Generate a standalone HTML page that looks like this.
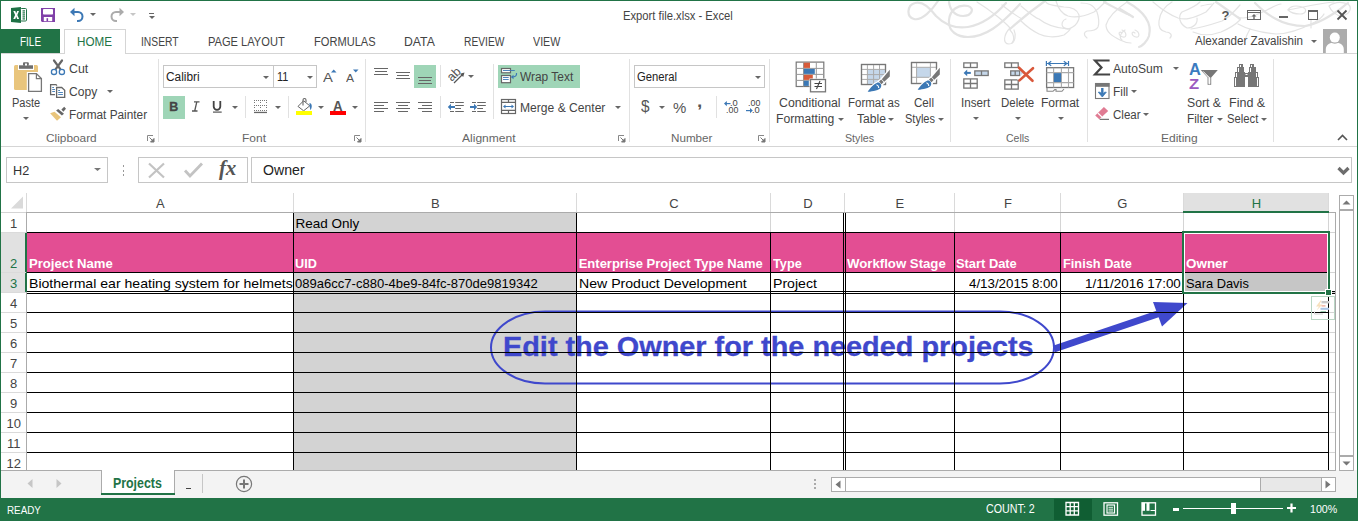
<!DOCTYPE html>
<html><head><meta charset="utf-8"><title>Excel</title>
<style>
*{margin:0;padding:0;box-sizing:border-box}
html,body{width:1358px;height:521px;overflow:hidden;background:#fff;font-family:"Liberation Sans",sans-serif;position:relative}
.a{position:absolute}
.t{position:absolute;white-space:nowrap;line-height:1;transform-origin:0 0}
svg.a{overflow:visible}
</style></head><body>
<div class="a" style="left:0px;top:0px;width:1358px;height:1px;background:#217346;"></div>
<div class="a" style="left:0px;top:0px;width:1px;height:521px;background:#217346;"></div>
<div class="a" style="left:1357px;top:0px;width:1px;height:521px;background:#217346;"></div>
<div class="t" style="left:623.10px;top:10.25px;font-size:12.00px;color:#444;transform:scaleX(0.9356);">Export file.xlsx - Excel</div>
<div class="a" style="left:0px;top:29px;width:60px;height:24px;background:#217346;"></div>
<div class="a" style="left:1px;top:53px;width:1356px;height:1px;background:#d5d5d5;"></div>
<div class="a" style="left:64px;top:29px;width:62px;height:25px;border:1px solid #d5d5d5;border-bottom:none;background:#fff"></div>
<div class="t" style="left:20.00px;top:36.25px;font-size:12.00px;color:#fff;transform:scaleX(0.8294);">FILE</div>
<div class="t" style="left:77.00px;top:36.25px;font-size:12.00px;color:#217346;transform:scaleX(0.9722);">HOME</div>
<div class="t" style="left:140.90px;top:36.25px;font-size:12.00px;color:#444;transform:scaleX(0.8584);">INSERT</div>
<div class="t" style="left:207.70px;top:36.25px;font-size:12.00px;color:#444;transform:scaleX(0.9250);">PAGE LAYOUT</div>
<div class="t" style="left:313.60px;top:36.25px;font-size:12.00px;color:#444;transform:scaleX(0.9241);">FORMULAS</div>
<div class="t" style="left:404.00px;top:36.25px;font-size:12.00px;color:#444;transform:scaleX(1.0185);">DATA</div>
<div class="t" style="left:463.80px;top:36.25px;font-size:12.00px;color:#444;transform:scaleX(0.8534);">REVIEW</div>
<div class="t" style="left:532.70px;top:36.25px;font-size:12.00px;color:#444;transform:scaleX(0.8904);">VIEW</div>
<div class="t" style="left:1195.40px;top:35.25px;font-size:12.00px;color:#444;transform:scaleX(0.9693);">Alexander Zavalishin</div>
<div class="a" style="left:1px;top:146px;width:1356px;height:1px;background:#d5d5d5;"></div>
<div class="a" style="left:158px;top:59px;width:1px;height:83px;background:#e1e1e1;"></div>
<div class="a" style="left:365px;top:59px;width:1px;height:83px;background:#e1e1e1;"></div>
<div class="a" style="left:629px;top:59px;width:1px;height:83px;background:#e1e1e1;"></div>
<div class="a" style="left:769px;top:59px;width:1px;height:83px;background:#e1e1e1;"></div>
<div class="a" style="left:950px;top:59px;width:1px;height:83px;background:#e1e1e1;"></div>
<div class="a" style="left:1087px;top:59px;width:1px;height:83px;background:#e1e1e1;"></div>
<div class="a" style="left:1273px;top:59px;width:1px;height:83px;background:#e1e1e1;"></div>
<div class="t" style="left:46.00px;top:132.50px;font-size:11.50px;color:#666;transform:scaleX(1.0301);">Clipboard</div>
<div class="t" style="left:241.90px;top:132.50px;font-size:11.50px;color:#666;transform:scaleX(1.0435);">Font</div>
<div class="t" style="left:462.40px;top:132.50px;font-size:11.50px;color:#666;transform:scaleX(1.0466);">Alignment</div>
<div class="t" style="left:671.00px;top:132.50px;font-size:11.50px;color:#666;transform:scaleX(1.0127);">Number</div>
<div class="t" style="left:844.70px;top:132.50px;font-size:11.50px;color:#666;transform:scaleX(0.9286);">Styles</div>
<div class="t" style="left:1006.10px;top:132.50px;font-size:11.50px;color:#666;transform:scaleX(0.9145);">Cells</div>
<div class="t" style="left:1161.10px;top:132.50px;font-size:11.50px;color:#666;transform:scaleX(1.0429);">Editing</div>
<div class="a" style="left:6px;top:157px;width:102px;height:26px;border:1px solid #c6c6c6;background:#fff;"></div>
<div class="a" style="left:138px;top:157px;width:110px;height:26px;border:1px solid #c6c6c6;background:#fff;"></div>
<div class="a" style="left:251px;top:157px;width:1101px;height:26px;border:1px solid #c6c6c6;background:#fff;"></div>
<div class="t" style="left:263.10px;top:163.25px;font-size:14.00px;color:#222;transform:scaleX(1.0090);">Owner</div>
<div class="a" style="left:1184px;top:193px;width:144px;height:19px;background:#e1e1e1;"></div>
<div class="a" style="left:293px;top:193px;width:1px;height:19px;background:#dadada;"></div>
<div class="a" style="left:576px;top:193px;width:1px;height:19px;background:#dadada;"></div>
<div class="a" style="left:770px;top:193px;width:1px;height:19px;background:#dadada;"></div>
<div class="a" style="left:844px;top:193px;width:1px;height:19px;background:#dadada;"></div>
<div class="a" style="left:954px;top:193px;width:1px;height:19px;background:#dadada;"></div>
<div class="a" style="left:1060px;top:193px;width:1px;height:19px;background:#dadada;"></div>
<div class="a" style="left:1183px;top:193px;width:1px;height:19px;background:#dadada;"></div>
<div class="a" style="left:1328px;top:193px;width:1px;height:19px;background:#dadada;"></div>
<div class="a" style="left:26px;top:193px;width:1px;height:19px;background:#dadada;"></div>
<div class="a" style="left:1px;top:212px;width:1335px;height:1px;background:#ababab;"></div>
<div class="a" style="left:1px;top:212px;width:25px;height:1px;background:#d4d4d4;"></div>
<div class="a" style="left:1183px;top:211px;width:146px;height:2px;background:#217346;"></div>
<div class="a" style="left:1px;top:233px;width:25px;height:59px;background:#e1e1e1;"></div>
<div class="a" style="left:26px;top:213px;width:1px;height:258px;background:#ababab;"></div>
<div class="a" style="left:25px;top:233px;width:2px;height:59px;background:#217346;"></div>
<div class="a" style="left:1px;top:232px;width:25px;height:1px;background:#dadada;"></div>
<div class="a" style="left:1px;top:272px;width:25px;height:1px;background:#dadada;"></div>
<div class="a" style="left:1px;top:292px;width:25px;height:1px;background:#dadada;"></div>
<div class="a" style="left:1px;top:312px;width:25px;height:1px;background:#dadada;"></div>
<div class="a" style="left:1px;top:332px;width:25px;height:1px;background:#dadada;"></div>
<div class="a" style="left:1px;top:352px;width:25px;height:1px;background:#dadada;"></div>
<div class="a" style="left:1px;top:372px;width:25px;height:1px;background:#dadada;"></div>
<div class="a" style="left:1px;top:392px;width:25px;height:1px;background:#dadada;"></div>
<div class="a" style="left:1px;top:412px;width:25px;height:1px;background:#dadada;"></div>
<div class="a" style="left:1px;top:432px;width:25px;height:1px;background:#dadada;"></div>
<div class="a" style="left:1px;top:452px;width:25px;height:1px;background:#dadada;"></div>
<div class="a" style="left:1px;top:470px;width:1356px;height:28px;background:#f3f3f3;"></div>
<div class="a" style="left:1px;top:470px;width:1335px;height:1px;background:#ababab;"></div>
<div class="a" style="left:1px;top:498px;width:1357px;height:23px;background:#217346;"></div>
<div class="a" style="left:294px;top:213px;width:282px;height:257px;background:#d3d3d3;"></div>
<div class="a" style="left:27px;top:233px;width:1301px;height:39px;background:#e34e93;"></div>
<div class="a" style="left:1184px;top:273px;width:144px;height:18px;background:#c6c6c6;"></div>
<div class="t" style="left:156.05px;top:197.25px;font-size:13.00px;color:#444;">A</div>
<div class="t" style="left:431.08px;top:197.25px;font-size:13.00px;color:#444;">B</div>
<div class="t" style="left:669.22px;top:197.25px;font-size:13.00px;color:#444;">C</div>
<div class="t" style="left:803.22px;top:197.25px;font-size:13.00px;color:#444;">D</div>
<div class="t" style="left:895.58px;top:197.25px;font-size:13.00px;color:#444;">E</div>
<div class="t" style="left:1003.93px;top:197.25px;font-size:13.00px;color:#444;">F</div>
<div class="t" style="left:1117.33px;top:197.25px;font-size:13.00px;color:#444;">G</div>
<div class="t" style="left:1251.72px;top:197.25px;font-size:13.00px;color:#217346;">H</div>
<div class="t" style="left:10.09px;top:217.25px;font-size:13.00px;color:#444;">1</div>
<div class="t" style="left:10.09px;top:257.25px;font-size:13.00px;color:#217346;">2</div>
<div class="t" style="left:10.09px;top:277.25px;font-size:13.00px;color:#217346;">3</div>
<div class="t" style="left:10.09px;top:297.25px;font-size:13.00px;color:#444;">4</div>
<div class="t" style="left:10.09px;top:317.25px;font-size:13.00px;color:#444;">5</div>
<div class="t" style="left:10.09px;top:337.25px;font-size:13.00px;color:#444;">6</div>
<div class="t" style="left:10.09px;top:357.25px;font-size:13.00px;color:#444;">7</div>
<div class="t" style="left:10.09px;top:377.25px;font-size:13.00px;color:#444;">8</div>
<div class="t" style="left:10.09px;top:397.25px;font-size:13.00px;color:#444;">9</div>
<div class="t" style="left:6.48px;top:417.25px;font-size:13.00px;color:#444;">10</div>
<div class="t" style="left:6.94px;top:437.25px;font-size:13.00px;color:#444;">11</div>
<div class="t" style="left:6.48px;top:457.25px;font-size:13.00px;color:#444;">12</div>
<div class="t" style="left:295.40px;top:217.00px;font-size:13.50px;color:#000;">Read Only</div>
<div class="t" style="left:28.70px;top:257.25px;font-size:13.00px;color:#fff;font-weight:bold;transform:scaleX(1.0088);">Project Name</div>
<div class="t" style="left:295.40px;top:257.25px;font-size:13.00px;color:#fff;font-weight:bold;transform:scaleX(0.9750);">UID</div>
<div class="t" style="left:578.70px;top:257.25px;font-size:13.00px;color:#fff;font-weight:bold;">Enterprise Project Type Name</div>
<div class="t" style="left:773.10px;top:257.25px;font-size:13.00px;color:#fff;font-weight:bold;transform:scaleX(0.9803);">Type</div>
<div class="t" style="left:846.50px;top:257.25px;font-size:13.00px;color:#fff;font-weight:bold;transform:scaleX(1.0154);">Workflow Stage</div>
<div class="t" style="left:956.40px;top:257.25px;font-size:13.00px;color:#fff;font-weight:bold;transform:scaleX(0.9898);">Start Date</div>
<div class="t" style="left:1062.80px;top:257.25px;font-size:13.00px;color:#fff;font-weight:bold;transform:scaleX(0.9819);">Finish Date</div>
<div class="t" style="left:1185.60px;top:257.25px;font-size:13.00px;color:#fff;font-weight:bold;transform:scaleX(1.0339);">Owner</div>
<div class="t" style="left:28.70px;top:277.00px;font-size:13.50px;color:#000;transform:scaleX(1.0433);">Biothermal ear heating system for helmets</div>
<div class="t" style="left:295.40px;top:277.00px;font-size:13.50px;color:#000;transform:scaleX(0.9656);">089a6cc7-c880-4be9-84fc-870de9819342</div>
<div class="t" style="left:578.70px;top:277.00px;font-size:13.50px;color:#000;transform:scaleX(1.0449);">New Product Development</div>
<div class="t" style="left:773.10px;top:277.00px;font-size:13.50px;color:#000;transform:scaleX(1.0432);">Project</div>
<div class="t" style="left:1185.60px;top:277.00px;font-size:13.50px;color:#000;transform:scaleX(0.9513);">Sara Davis</div>
<div class="t" style="left:968.60px;top:277.00px;font-size:13.50px;color:#000;transform:scaleX(0.9854);">4/13/2015 8:00</div>
<div class="t" style="left:1084.80px;top:277.00px;font-size:13.50px;color:#000;transform:scaleX(0.9918);">1/11/2016 17:00</div>
<svg class="a" style="left:0px;top:0px;" width="1358" height="521" viewBox="0 0 1358 521"><rect x="491" y="311.5" width="563" height="72" rx="54" ry="36" fill="none" stroke="#3f48cc" stroke-width="2"/><line x1="1054" y1="349" x2="1162" y2="312.5" stroke="#3f48cc" stroke-width="7"/><path d="M1153 302 L1187.5 303 L1162 326.5 Z" fill="#3f48cc"/></svg>
<div class="t" style="left:502.90px;top:332.00px;font-size:28.50px;color:#3f48cc;font-weight:bold;transform:scaleX(1.0124);-webkit-text-stroke:0.3px #3f48cc;">Edit the Owner for the needed projects</div>
<div class="a" style="left:770px;top:213px;width:1px;height:19px;background:#d4d4d4;"></div>
<div class="a" style="left:954px;top:213px;width:1px;height:19px;background:#d4d4d4;"></div>
<div class="a" style="left:1060px;top:213px;width:1px;height:19px;background:#d4d4d4;"></div>
<div class="a" style="left:1183px;top:213px;width:1px;height:19px;background:#d4d4d4;"></div>
<div class="a" style="left:1328px;top:213px;width:1px;height:19px;background:#d4d4d4;"></div>
<div class="a" style="left:293px;top:213px;width:1px;height:257px;background:#000;"></div>
<div class="a" style="left:576px;top:213px;width:1px;height:257px;background:#000;"></div>
<div class="a" style="left:843px;top:213px;width:1px;height:257px;background:#000;"></div>
<div class="a" style="left:845px;top:213px;width:1px;height:257px;background:#000;"></div>
<div class="a" style="left:770px;top:233px;width:1px;height:237px;background:#000;"></div>
<div class="a" style="left:954px;top:233px;width:1px;height:237px;background:#000;"></div>
<div class="a" style="left:1060px;top:233px;width:1px;height:237px;background:#000;"></div>
<div class="a" style="left:1183px;top:233px;width:1px;height:237px;background:#000;"></div>
<div class="a" style="left:1328px;top:233px;width:1px;height:237px;background:#000;"></div>
<div class="a" style="left:27px;top:232px;width:1302px;height:1px;background:#000;"></div>
<div class="a" style="left:27px;top:272px;width:1302px;height:1px;background:#000;"></div>
<div class="a" style="left:27px;top:291px;width:1302px;height:1px;background:#000;"></div>
<div class="a" style="left:27px;top:293px;width:1302px;height:1px;background:#000;"></div>
<div class="a" style="left:27px;top:312px;width:1302px;height:1px;background:#000;"></div>
<div class="a" style="left:27px;top:332px;width:1302px;height:1px;background:#000;"></div>
<div class="a" style="left:27px;top:352px;width:1302px;height:1px;background:#000;"></div>
<div class="a" style="left:27px;top:372px;width:1302px;height:1px;background:#000;"></div>
<div class="a" style="left:27px;top:392px;width:1302px;height:1px;background:#000;"></div>
<div class="a" style="left:27px;top:412px;width:1302px;height:1px;background:#000;"></div>
<div class="a" style="left:27px;top:432px;width:1302px;height:1px;background:#000;"></div>
<div class="a" style="left:27px;top:452px;width:1302px;height:1px;background:#000;"></div>
<div class="a" style="left:1329px;top:213px;width:6px;height:257px;background:#fff;"></div>
<div class="a" style="left:1335px;top:212px;width:1px;height:258px;background:#ababab;"></div>
<div class="a" style="left:1329px;top:232px;width:6px;height:1px;background:#d4d4d4;"></div>
<div class="a" style="left:1329px;top:272px;width:6px;height:1px;background:#d4d4d4;"></div>
<div class="a" style="left:1329px;top:292px;width:6px;height:1px;background:#d4d4d4;"></div>
<div class="a" style="left:1329px;top:312px;width:6px;height:1px;background:#d4d4d4;"></div>
<div class="a" style="left:1329px;top:332px;width:6px;height:1px;background:#d4d4d4;"></div>
<div class="a" style="left:1329px;top:352px;width:6px;height:1px;background:#d4d4d4;"></div>
<div class="a" style="left:1329px;top:372px;width:6px;height:1px;background:#d4d4d4;"></div>
<div class="a" style="left:1329px;top:392px;width:6px;height:1px;background:#d4d4d4;"></div>
<div class="a" style="left:1329px;top:412px;width:6px;height:1px;background:#d4d4d4;"></div>
<div class="a" style="left:1329px;top:432px;width:6px;height:1px;background:#d4d4d4;"></div>
<div class="a" style="left:1329px;top:452px;width:6px;height:1px;background:#d4d4d4;"></div>
<div class="a" style="left:1182px;top:231px;width:148px;height:63px;border:2px solid #217346"></div>
<div class="a" style="left:1184px;top:233px;width:144px;height:1px;background:#fff;"></div>
<div class="a" style="left:1184px;top:291px;width:144px;height:1px;background:#fff;"></div>
<div class="a" style="left:1327px;top:233px;width:1px;height:59px;background:#fff;"></div>
<div class="a" style="left:1184px;top:233px;width:1px;height:59px;background:#fff;"></div>
<div class="a" style="left:1329px;top:291px;width:6px;height:1px;background:#000;"></div>
<div class="a" style="left:1329px;top:293px;width:6px;height:1px;background:#000;"></div>
<div class="a" style="left:1325px;top:289px;width:7px;height:7px;background:#fff;"></div>
<div class="a" style="left:1326px;top:290px;width:5px;height:5px;background:#217346;"></div>
<svg class="a" style="left:0px;top:0px;" width="1358" height="52" viewBox="0 0 1358 52"><g fill="none" stroke="#e3e3e3" stroke-linecap="round"><path d="M938 1 C 932 10, 922 21, 914 19 C 906 17, 907 5, 915 3 C 922 1, 930 8, 936 16 C 945 25, 955 29, 968 27 C 985 24, 998 12, 1006 3" stroke-width="2.2"/><path d="M949 2 C 950 10, 955 16, 963 16 C 972 16, 975 8, 968 6 C 958 4, 950 10, 949 20 C 948 32, 958 37, 968 37 C 985 37, 1000 26, 1020 4" stroke-width="2.2"/><path d="M1010 29 C 1020 20, 1035 8, 1045 1" stroke-width="2.2"/><path d="M1104 2 C 1112 6, 1122 12, 1130 15" stroke-width="2.2"/><path d="M1127 2 C 1145 12, 1152 24, 1149 36 C 1147 42, 1142 46, 1139 47" stroke-width="2.2"/><path d="M1120 9 C 1125 12, 1130 15, 1133 17" stroke-width="2.2"/><path d="M1216 2 C 1225 8, 1233 14, 1240 19" stroke-width="2.2"/><path d="M1255 3 C 1262 10, 1270 16, 1276 19 C 1283 23, 1292 26, 1305 26 C 1318 24, 1330 16, 1339 10 C 1343 7, 1346 4, 1348 3" stroke-width="2.2"/><path d="M977 2 C 990 10, 1005 22, 1010 28 C 1004 34, 1002 44, 1009 44 C 1016 44, 1016 34, 1014 30" stroke-width="1.2"/><path d="M1002 5 C 1008 10, 1015 15, 1022 19" stroke-width="1.2"/><path d="M1021 6 C 1028 12, 1035 18, 1039 19 C 1045 24, 1055 28, 1068 29 C 1076 27, 1080 20, 1079 15 C 1077 9, 1070 7, 1064 7 C 1055 6, 1047 5, 1046 2" stroke-width="1.2"/><path d="M1021 21 C 1028 28, 1035 32, 1039 34 C 1045 37, 1055 38, 1064 35 C 1068 32, 1070 30, 1070 29" stroke-width="1.2"/><path d="M1066 19 C 1062 20, 1061 25, 1063 27 C 1065 29, 1068 29, 1070 29" stroke-width="1.2"/><path d="M1056 1 C 1058 8, 1062 14, 1068 16 C 1075 18, 1083 17, 1094 12 C 1100 8, 1103 4, 1106 1" stroke-width="1.2"/><path d="M1081 3 C 1088 3, 1093 4, 1097 12 C 1099 18, 1099 24, 1098 27 C 1096 31, 1090 31, 1087 31 C 1084 32, 1083 35, 1087 38" stroke-width="1.2"/><path d="M1127 2 C 1115 10, 1108 18, 1106 25 C 1106 32, 1112 36, 1120 40 C 1124 42, 1128 43, 1131 43" stroke-width="1.2"/><path d="M1125 30 C 1120 33, 1119 38, 1122 40" stroke-width="1.2"/><path d="M1010 30 C 1014 34, 1015 40, 1012 43" stroke-width="1.2"/><path d="M1122 33 C 1118 30, 1118 36, 1123 37 C 1127 38, 1127 32, 1122 30" stroke-width="1.2"/><path d="M1135 33 C 1131 30, 1131 36, 1136 37 C 1140 38, 1140 32, 1135 30" stroke-width="1.2"/><path d="M1153 2 C 1160 8, 1170 15, 1178 18 C 1185 20, 1192 19, 1206 12 C 1210 8, 1213 4, 1214 3" stroke-width="1.2"/><path d="M1172 2 C 1165 6, 1160 12, 1159 21 C 1158 28, 1161 31, 1166 32 C 1170 32, 1173 35, 1170 38" stroke-width="1.2"/><path d="M1200 2 C 1196 6, 1192 8, 1182 12 C 1178 16, 1179 24, 1187 28 C 1193 28, 1198 24, 1197 18" stroke-width="1.2"/><path d="M1191 29 C 1200 28, 1210 25, 1222 21 C 1228 18, 1234 12, 1240 5" stroke-width="1.2"/><path d="M1193 32 C 1200 35, 1210 36, 1221 32 C 1228 29, 1234 26, 1240 20" stroke-width="1.2"/><path d="M1201 6 C 1205 5, 1209 4, 1212 4" stroke-width="1.2"/><path d="M1288 10 C 1290 6, 1296 5, 1302 7 C 1308 9, 1306 14, 1300 14 C 1294 14, 1290 12, 1288 10 C 1300 8, 1315 4, 1334 2" stroke-width="1.2"/><path d="M1329 6 C 1333 3, 1340 1, 1348 4 C 1352 7, 1351 14, 1342 16 C 1336 16, 1331 11, 1329 6" stroke-width="1.2"/><path d="M1238 17 C 1244 20, 1255 16, 1267 10 C 1273 7, 1278 4, 1281 4" stroke-width="1.2"/><path d="M1238 24 C 1245 28, 1255 32, 1276 34 C 1287 34, 1300 30, 1315 22 C 1320 19, 1323 16, 1324 14" stroke-width="1.2"/><path d="M1250 29 C 1248 33, 1246 36, 1246 38" stroke-width="1.2"/><path d="M1311 19 C 1311 22, 1311 25, 1311 28" stroke-width="1.2"/></g></svg>
<svg class="a" style="left:10px;top:6px;" width="18" height="18" viewBox="0 0 18 18"><path d="M1 2 L11 1 V17 L1 16 Z" fill="#1e7145"/><rect x="10.5" y="2.5" width="6" height="12.5" rx="1" fill="#fff" stroke="#1e7145" stroke-width="1"/><g fill="#1e7145"><rect x="12.5" y="4.3" width="2.5" height="1.2"/><rect x="12.5" y="6.3" width="2.5" height="1.2"/><rect x="12.5" y="8.3" width="2.5" height="1.2"/><rect x="12.5" y="10.3" width="2.5" height="1.2"/><rect x="12.5" y="12.3" width="2.5" height="1.2"/></g><path d="M3.3 5 H5.3 L6.2 7.5 L7.1 5 H9 L7.3 9 L9.1 13 H7.1 L6.2 10.5 L5.3 13 H3.3 L5.1 9 Z" fill="#fff"/></svg>
<svg class="a" style="left:41px;top:8px;" width="14" height="14" viewBox="0 0 14 14"><path d="M0 0 H14 V14 H1 L0 13 Z" fill="#8040a8"/><rect x="2" y="1" width="10" height="5.5" rx="0.8" fill="#fff"/><rect x="2.8" y="9" width="8.4" height="4.2" fill="#fff"/><rect x="5.5" y="10.2" width="1.6" height="3" fill="#8040a8"/></svg>
<svg class="a" style="left:69px;top:7px;" width="16" height="15" viewBox="0 0 16 15"><path d="M3 5 H9 A4.5 4.5 0 0 1 9 14 H8" fill="none" stroke="#3c78b5" stroke-width="2"/><path d="M1 5 L5.5 0.8 V9.2 Z" fill="#3c78b5"/></svg>
<svg class="a" style="left:89.5px;top:13px;" width="6.0" height="3.5" viewBox="0 0 6.0 3.5"><path d="M0 0H6 L3.0 3 Z" fill="#666"/></svg>
<svg class="a" style="left:109px;top:7px;" width="16" height="15" viewBox="0 0 16 15"><path d="M13 5 H7 A4.5 4.5 0 0 0 7 14 H8" fill="none" stroke="#ababab" stroke-width="2"/><path d="M15 5 L10.5 0.8 V9.2 Z" fill="#ababab"/></svg>
<svg class="a" style="left:129.5px;top:13px;" width="6.0" height="3.5" viewBox="0 0 6.0 3.5"><path d="M0 0H6 L3.0 3 Z" fill="#c6c6c6"/></svg>
<div class="a" style="left:149px;top:13px;width:5px;height:1px;background:#666;"></div>
<svg class="a" style="left:148.5px;top:16px;" width="6.0" height="3.5" viewBox="0 0 6.0 3.5"><path d="M0 0H6 L3.0 3 Z" fill="#666"/></svg>
<div class="t" style="left:1221.54px;top:9.25px;font-size:13.00px;color:#555;font-weight:bold;">?</div>
<svg class="a" style="left:1247px;top:10px;" width="15" height="11" viewBox="0 0 15 11"><rect x="0.5" y="0.5" width="13" height="9" fill="none" stroke="#666"/><line x1="1" y1="2.5" x2="13" y2="2.5" stroke="#666"/><path d="M7 4 L4.5 6.5 H6.3 V9 H7.7 V6.5 H9.5 Z" fill="#666"/></svg>
<div class="a" style="left:1279px;top:16px;width:9px;height:2px;background:#666;"></div>
<div class="a" style="left:1308px;top:10px;width:10px;height:2px;background:#666;"></div>
<div class="a" style="left:1308px;top:10px;width:1px;height:10px;background:#666;"></div>
<div class="a" style="left:1317px;top:10px;width:1px;height:10px;background:#666;"></div>
<div class="a" style="left:1308px;top:19px;width:10px;height:1px;background:#666;"></div>
<svg class="a" style="left:1336px;top:9px;" width="12" height="12" viewBox="0 0 12 12"><path d="M1.5 1.5 L10.5 10.5 M10.5 1.5 L1.5 10.5" stroke="#555" stroke-width="1.8"/></svg>
<svg class="a" style="left:1310.5px;top:40px;" width="6.0" height="3.5" viewBox="0 0 6.0 3.5"><path d="M0 0H6 L3.0 3 Z" fill="#666"/></svg>
<svg class="a" style="left:1323px;top:29px;" width="24" height="24" viewBox="0 0 24 24"><rect width="24" height="24" fill="#acacac"/><path d="M2.8 24 V20.5 C2.8 16, 6.5 13.6, 11.8 13.6 C17.1 13.6, 20.8 16, 20.8 20.5 V24 Z" fill="#fff"/><circle cx="11.8" cy="8.6" r="6.2" fill="#acacac"/><circle cx="11.8" cy="8.6" r="5" fill="#fff"/></svg>
<svg class="a" style="left:8px;top:58px;" width="40" height="40" viewBox="0 0 40 40"><rect x="6" y="7" width="24" height="25" rx="1.5" fill="#e9c57c"/><rect x="10" y="6" width="16" height="6" fill="#fff"/><rect x="11" y="7.3" width="14" height="3.5" fill="#6d6d6d"/><rect x="15" y="4.2" width="5.8" height="3.5" rx="1" fill="#6d6d6d"/><rect x="17" y="5.5" width="2" height="2" fill="#fff"/><rect x="18.8" y="14" width="16" height="20.5" fill="#fff"/><path d="M20.6 15.6 H28.4 L33.4 20.6 V33.4 H20.6 Z" fill="#fff" stroke="#777" stroke-width="1.3"/><path d="M28.4 15.6 V20.6 H33.4" fill="none" stroke="#777" stroke-width="1.2"/></svg>
<div class="t" style="left:11.90px;top:97.25px;font-size:12.00px;color:#444;transform:scaleX(0.9198);">Paste</div>
<svg class="a" style="left:22.5px;top:117px;" width="6.0" height="3.5" viewBox="0 0 6.0 3.5"><path d="M0 0H6 L3.0 3 Z" fill="#666"/></svg>
<svg class="a" style="left:46px;top:56px;" width="24" height="24" viewBox="0 0 24 24"><path d="M8 4.5 L14.3 13.2 M16 4.5 L9.7 13.2" stroke="#666" stroke-width="2.2" stroke-linecap="round"/><circle cx="8" cy="15.9" r="2.6" fill="#fff" stroke="#3c78b5" stroke-width="1.3"/><circle cx="15.9" cy="15.9" r="2.6" fill="#fff" stroke="#3c78b5" stroke-width="1.3"/></svg>
<div class="t" style="left:68.90px;top:63.25px;font-size:12.00px;color:#444;transform:scaleX(1.0289);">Cut</div>
<svg class="a" style="left:46px;top:80px;" width="24" height="24" viewBox="0 0 24 24"><path d="M9 14.7 H4.6 V4.6 H10 L11 5.6" fill="none" stroke="#666" stroke-width="1.3"/><g fill="#3c78b5"><rect x="6.2" y="7" width="1.8" height="0.9"/><rect x="6.2" y="9" width="2.8" height="0.9"/><rect x="6.2" y="11" width="2.8" height="0.9"/></g><path d="M10.6 7.5 H15.7 L18.7 10.2 V17.4 H10.6 Z" fill="#fff" stroke="#666" stroke-width="1.3"/><g fill="#3c78b5"><rect x="12.2" y="10.1" width="1.8" height="0.9"/><rect x="12.2" y="12" width="4.7" height="0.9"/><rect x="12.2" y="14.1" width="4.7" height="0.9"/></g></svg>
<div class="t" style="left:68.90px;top:86.25px;font-size:12.00px;color:#444;transform:scaleX(1.0064);">Copy</div>
<svg class="a" style="left:106.5px;top:90px;" width="6.0" height="3.5" viewBox="0 0 6.0 3.5"><path d="M0 0H6 L3.0 3 Z" fill="#666"/></svg>
<svg class="a" style="left:46px;top:102px;" width="24" height="24" viewBox="0 0 24 24"><path d="M4.1 11.3 L8.5 9.7 L15 15.2 L11 18.7 Z" fill="#e9c57c"/><path d="M10.1 8.5 L12.2 6.9 L18 11.75 L15.9 13.6 Z" fill="#666"/><path d="M15.4 7.4 L18.2 4.8 L20 6.7 L17.3 9.7 Z" fill="#666"/></svg>
<div class="t" style="left:68.90px;top:109.25px;font-size:12.00px;color:#444;transform:scaleX(0.9839);">Format Painter</div>
<svg class="a" style="left:147px;top:135px;" width="8" height="7" viewBox="0 0 8 7"><path d="M0.5 6 V0.5 H6" fill="none" stroke="#888" stroke-width="1"/><path d="M2.5 2.5 L6.5 6.5 M7 3.5 V7 H3.5 Z" stroke="#777" fill="#777" stroke-width="1"/></svg>
<svg class="a" style="left:354px;top:135px;" width="8" height="7" viewBox="0 0 8 7"><path d="M0.5 6 V0.5 H6" fill="none" stroke="#888" stroke-width="1"/><path d="M2.5 2.5 L6.5 6.5 M7 3.5 V7 H3.5 Z" stroke="#777" fill="#777" stroke-width="1"/></svg>
<svg class="a" style="left:618px;top:135px;" width="8" height="7" viewBox="0 0 8 7"><path d="M0.5 6 V0.5 H6" fill="none" stroke="#888" stroke-width="1"/><path d="M2.5 2.5 L6.5 6.5 M7 3.5 V7 H3.5 Z" stroke="#777" fill="#777" stroke-width="1"/></svg>
<svg class="a" style="left:758px;top:135px;" width="8" height="7" viewBox="0 0 8 7"><path d="M0.5 6 V0.5 H6" fill="none" stroke="#888" stroke-width="1"/><path d="M2.5 2.5 L6.5 6.5 M7 3.5 V7 H3.5 Z" stroke="#777" fill="#777" stroke-width="1"/></svg>
<div class="a" style="left:163px;top:65px;width:111px;height:23px;border:1px solid #c6c6c6;background:#fff;"></div>
<div class="a" style="left:273px;top:65px;width:44px;height:23px;border:1px solid #c6c6c6;background:#fff;"></div>
<div class="t" style="left:166.20px;top:71.25px;font-size:12.00px;color:#222;transform:scaleX(0.9877);">Calibri</div>
<div class="t" style="left:276.90px;top:71.25px;font-size:12.00px;color:#222;transform:scaleX(0.9054);">11</div>
<svg class="a" style="left:263.0px;top:76px;" width="6.0" height="3.5" viewBox="0 0 6.0 3.5"><path d="M0 0H6 L3.0 3 Z" fill="#666"/></svg>
<svg class="a" style="left:306.5px;top:76px;" width="6.0" height="3.5" viewBox="0 0 6.0 3.5"><path d="M0 0H6 L3.0 3 Z" fill="#666"/></svg>
<div class="t" style="left:322.80px;top:71.00px;font-size:13.50px;color:#555;transform:scaleX(1.0945);">A</div>
<svg class="a" style="left:331px;top:68.5px;" width="6" height="4" viewBox="0 0 6 4"><path d="M0 3.5 L2.75 0.5 L5.5 3.5 Z" fill="#3c78b5"/></svg>
<div class="t" style="left:345.60px;top:72.75px;font-size:11.00px;color:#555;transform:scaleX(1.0991);">A</div>
<svg class="a" style="left:353px;top:68.5px;" width="6" height="4" viewBox="0 0 6 4"><path d="M0 0.5 L2.75 3.5 L5.5 0.5 Z" fill="#3c78b5"/></svg>
<div class="a" style="left:163px;top:96px;width:22px;height:23px;background:#9fd5b7;"></div>
<div class="t" style="left:169.20px;top:101.00px;font-size:12.50px;color:#444;font-weight:bold;-webkit-text-stroke:0.3px #444;">B</div>
<svg class="a" style="left:190px;top:101px;" width="12" height="11" viewBox="0 0 12 11"><path d="M4 0.8 H9.5 M2 10 H7.5 M6.8 0.8 L4.7 10" stroke="#555" stroke-width="1.3" fill="none"/></svg>
<svg class="a" style="left:211px;top:100px;" width="12" height="14" viewBox="0 0 12 14"><path d="M2.7 1 V6.5 A3.3 3.3 0 0 0 9.3 6.5 V1" fill="none" stroke="#444" stroke-width="1.8"/><rect x="2" y="11.5" width="8.7" height="1.2" fill="#555"/></svg>
<svg class="a" style="left:231.5px;top:106px;" width="6.0" height="3.5" viewBox="0 0 6.0 3.5"><path d="M0 0H6 L3.0 3 Z" fill="#666"/></svg>
<div class="a" style="left:245px;top:96px;width:1px;height:22px;background:#e1e1e1;"></div>
<svg class="a" style="left:253px;top:99px;" width="15" height="15" viewBox="0 0 15 15"><g fill="#777"><rect x="1" y="1" width="1" height="1"/><rect x="3" y="1" width="1" height="1"/><rect x="5" y="1" width="1" height="1"/><rect x="7" y="1" width="1" height="1"/><rect x="9" y="1" width="1" height="1"/><rect x="11" y="1" width="1" height="1"/><rect x="13" y="1" width="1" height="1"/><rect x="1" y="6" width="1" height="1"/><rect x="3" y="6" width="1" height="1"/><rect x="5" y="6" width="1" height="1"/><rect x="7" y="6" width="1" height="1"/><rect x="9" y="6" width="1" height="1"/><rect x="11" y="6" width="1" height="1"/><rect x="13" y="6" width="1" height="1"/><rect x="1" y="11" width="1" height="1"/><rect x="3" y="11" width="1" height="1"/><rect x="5" y="11" width="1" height="1"/><rect x="7" y="11" width="1" height="1"/><rect x="9" y="11" width="1" height="1"/><rect x="11" y="11" width="1" height="1"/><rect x="13" y="11" width="1" height="1"/><rect x="1" y="3" width="1" height="1"/><rect x="1" y="8" width="1" height="1"/><rect x="7" y="3" width="1" height="1"/><rect x="7" y="8" width="1" height="1"/><rect x="13" y="3" width="1" height="1"/><rect x="13" y="8" width="1" height="1"/></g><rect x="1" y="12.8" width="13" height="1.3" fill="#666"/></svg>
<svg class="a" style="left:274.5px;top:106px;" width="6.0" height="3.5" viewBox="0 0 6.0 3.5"><path d="M0 0H6 L3.0 3 Z" fill="#666"/></svg>
<div class="a" style="left:288px;top:96px;width:1px;height:22px;background:#e1e1e1;"></div>
<svg class="a" style="left:295px;top:98px;" width="18" height="18" viewBox="0 0 18 18"><path d="M3 8.4 L8.6 2.8 L14.8 7.8 L8.6 12.8 Z" fill="#fff" stroke="#666" stroke-width="1"/><path d="M8 7.5 V2 A1.5 1.5 0 0 1 11 2 V4" fill="none" stroke="#666" stroke-width="1.1"/><path d="M14.5 5 C17 5, 17.5 9, 15.5 12.3 C 14.8 10, 14.5 8, 14.5 5 Z" fill="#3c78b5"/><rect x="1" y="13" width="16" height="4" fill="#ffff00"/></svg>
<svg class="a" style="left:317.5px;top:106px;" width="6.0" height="3.5" viewBox="0 0 6.0 3.5"><path d="M0 0H6 L3.0 3 Z" fill="#666"/></svg>
<div class="t" style="left:333.40px;top:99.25px;font-size:14.00px;color:#555;font-weight:bold;transform:scaleX(0.9524);">A</div>
<div class="a" style="left:330px;top:111px;width:16px;height:4px;background:#ff0000;"></div>
<svg class="a" style="left:351.5px;top:106px;" width="6.0" height="3.5" viewBox="0 0 6.0 3.5"><path d="M0 0H6 L3.0 3 Z" fill="#666"/></svg>
<div class="a" style="left:374px;top:68px;width:14px;height:1px;background:#666;"></div>
<div class="a" style="left:375px;top:71px;width:12px;height:1px;background:#666;"></div>
<div class="a" style="left:374px;top:74px;width:14px;height:1px;background:#666;"></div>
<div class="a" style="left:396px;top:72px;width:14px;height:1px;background:#666;"></div>
<div class="a" style="left:397px;top:75px;width:12px;height:1px;background:#666;"></div>
<div class="a" style="left:396px;top:78px;width:14px;height:1px;background:#666;"></div>
<div class="a" style="left:414px;top:65px;width:22px;height:23px;background:#9fd5b7;"></div>
<div class="a" style="left:418px;top:77px;width:14px;height:1px;background:#666;"></div>
<div class="a" style="left:419px;top:80px;width:12px;height:1px;background:#666;"></div>
<div class="a" style="left:418px;top:83px;width:14px;height:1px;background:#666;"></div>
<div class="a" style="left:374px;top:102px;width:14px;height:1px;background:#666;"></div>
<div class="a" style="left:374px;top:105px;width:10px;height:1px;background:#666;"></div>
<div class="a" style="left:374px;top:108px;width:14px;height:1px;background:#666;"></div>
<div class="a" style="left:374px;top:111px;width:10px;height:1px;background:#666;"></div>
<div class="a" style="left:396px;top:102px;width:14px;height:1px;background:#666;"></div>
<div class="a" style="left:398px;top:105px;width:10px;height:1px;background:#666;"></div>
<div class="a" style="left:396px;top:108px;width:14px;height:1px;background:#666;"></div>
<div class="a" style="left:398px;top:111px;width:10px;height:1px;background:#666;"></div>
<div class="a" style="left:418px;top:102px;width:14px;height:1px;background:#666;"></div>
<div class="a" style="left:422px;top:105px;width:10px;height:1px;background:#666;"></div>
<div class="a" style="left:418px;top:108px;width:14px;height:1px;background:#666;"></div>
<div class="a" style="left:422px;top:111px;width:10px;height:1px;background:#666;"></div>
<div class="a" style="left:440px;top:65px;width:1px;height:22px;background:#e1e1e1;"></div>
<div class="a" style="left:440px;top:96px;width:1px;height:22px;background:#e1e1e1;"></div>
<div class="t" style="left:448px;top:66.5px;font-size:12.5px;color:#555;transform:rotate(-45deg);transform-origin:8px 8px">ab</div>
<svg class="a" style="left:452px;top:71px;" width="14" height="14" viewBox="0 0 14 14"><path d="M2 12 L11 3" stroke="#555" stroke-width="1.2"/><path d="M12.5 1.5 L8 2.8 L11.2 6 Z" fill="#555"/></svg>
<svg class="a" style="left:467.5px;top:75px;" width="6.0" height="3.5" viewBox="0 0 6.0 3.5"><path d="M0 0H6 L3.0 3 Z" fill="#666"/></svg>
<div class="a" style="left:493px;top:64px;width:1px;height:55px;background:#e1e1e1;"></div>
<div class="a" style="left:498px;top:65px;width:82px;height:23px;background:#9fd5b7;"></div>
<svg class="a" style="left:500px;top:67px;" width="18" height="17" viewBox="0 0 18 17"><rect x="1.5" y="1.5" width="9" height="4.3" fill="#fff" stroke="#666" stroke-width="1.2"/><rect x="1.5" y="8.5" width="9" height="7.2" fill="#fff" stroke="#666" stroke-width="1.2"/><rect x="3" y="3" width="11.8" height="0.9" fill="#3c78b5"/><rect x="3" y="10.1" width="5.7" height="0.9" fill="#3c78b5"/><rect x="3" y="12.1" width="5.7" height="0.9" fill="#3c78b5"/><path d="M16.5 6 C17 9, 15 10, 12 10" fill="none" stroke="#3c78b5" stroke-width="1.2"/><path d="M10.8 10 L13.5 7.8 V12.2 Z" fill="#3c78b5"/></svg>
<div class="t" style="left:519.80px;top:71.25px;font-size:12.00px;color:#444;transform:scaleX(0.9929);">Wrap Text</div>
<svg class="a" style="left:447px;top:98px;" width="18" height="14" viewBox="0 0 18 14"><g fill="#666"><rect x="3" y="4" width="4" height="1"/><rect x="8.2" y="4" width="8.6" height="1"/><rect x="8.2" y="7" width="8.6" height="1"/><rect x="8.2" y="10" width="5.8" height="1"/><rect x="3" y="13" width="4" height="1"/><rect x="8.2" y="13" width="8.6" height="1"/></g><path d="M0.8 9 L4 5.8 V7.9 H8 V10.1 H4 V12.2 Z" fill="#3c78b5"/></svg>
<svg class="a" style="left:469px;top:98px;" width="18" height="14" viewBox="0 0 18 14"><g fill="#666"><rect x="3" y="4" width="4" height="1"/><rect x="8.2" y="4" width="8.6" height="1"/><rect x="8.2" y="7" width="8.6" height="1"/><rect x="8.2" y="10" width="5.8" height="1"/><rect x="3" y="13" width="4" height="1"/><rect x="8.2" y="13" width="8.6" height="1"/></g><path d="M8.2 9 L5 5.8 V7.9 H1 V10.1 H5 V12.2 Z" fill="#3c78b5"/></svg>
<svg class="a" style="left:500px;top:98px;" width="17" height="17" viewBox="0 0 17 17"><rect x="1.5" y="1.5" width="14" height="14" fill="#fff" stroke="#666" stroke-width="1.2"/><path d="M1.5 4.3 H15.5 M1.5 12.3 H15.5 M8.5 1.5 V4.3 M8.5 12.3 V15.5" stroke="#666" stroke-width="1.2"/><path d="M4 8.5 H13" stroke="#3c78b5" stroke-width="1"/><path d="M3 8.5 L5.5 6.5 V10.5 Z M14 8.5 L11.5 6.5 V10.5 Z" fill="#3c78b5"/></svg>
<div class="t" style="left:519.80px;top:102.25px;font-size:12.00px;color:#444;transform:scaleX(1.0080);">Merge &amp; Center</div>
<svg class="a" style="left:614.5px;top:106px;" width="6.0" height="3.5" viewBox="0 0 6.0 3.5"><path d="M0 0H6 L3.0 3 Z" fill="#666"/></svg>
<div class="a" style="left:634px;top:65px;width:131px;height:23px;border:1px solid #c6c6c6;background:#fff;"></div>
<div class="t" style="left:636.70px;top:71.25px;font-size:12.00px;color:#222;transform:scaleX(0.9387);">General</div>
<svg class="a" style="left:754.5px;top:76px;" width="6.0" height="3.5" viewBox="0 0 6.0 3.5"><path d="M0 0H6 L3.0 3 Z" fill="#666"/></svg>
<div class="t" style="left:641.10px;top:98.75px;font-size:16.00px;color:#555;transform:scaleX(0.9572);">$</div>
<svg class="a" style="left:658.5px;top:106px;" width="6.0" height="3.5" viewBox="0 0 6.0 3.5"><path d="M0 0H6 L3.0 3 Z" fill="#666"/></svg>
<div class="t" style="left:672.70px;top:101.00px;font-size:14.50px;color:#555;transform:scaleX(1.0306);">%</div>
<div class="t" style="left:697.40px;top:93.75px;font-size:16.00px;color:#555;font-weight:bold;transform:scaleX(1.1830);">,</div>
<div class="a" style="left:716px;top:96px;width:1px;height:22px;background:#e1e1e1;"></div>
<svg class="a" style="left:723px;top:99px;" width="17" height="15" viewBox="0 0 17 15"><path d="M2 4.6 H7.5" stroke="#3c78b5" stroke-width="1.2"/><path d="M1 4.6 L3.8 2 V7.2 Z" fill="#3c78b5"/></svg>
<div class="t" style="left:730.40px;top:99.00px;font-size:8.50px;color:#444;transform:scaleX(1.0990);">.0</div>
<div class="t" style="left:725.90px;top:106.00px;font-size:8.50px;color:#444;transform:scaleX(1.0410);">.00</div>
<div class="t" style="left:747.90px;top:99.00px;font-size:8.50px;color:#444;transform:scaleX(1.0410);">.00</div>
<div class="t" style="left:752.40px;top:106.00px;font-size:8.50px;color:#444;transform:scaleX(1.0990);">.0</div>
<svg class="a" style="left:745px;top:104px;" width="9" height="9" viewBox="0 0 9 9"><path d="M1 6.6 H6.5" stroke="#3c78b5" stroke-width="1.2"/><path d="M7.8 6.6 L5 4 V9.2 Z" fill="#3c78b5"/></svg>
<svg class="a" style="left:795px;top:61px;" width="32" height="32" viewBox="0 0 32 32"><rect x="1.2" y="1.1" width="27.6" height="24.4" fill="#fff" stroke="#777" stroke-width="1.2"/><path d="M1.2 7.4 H28.8 M1.2 13.4 H28.8 M1.2 19.4 H28.8 M8.5 1.1 V25.5 M21.3 1.1 V25.5" stroke="#999" stroke-width="1"/><rect x="8.8" y="1.7" width="6.2" height="5.2" fill="#d75b3a"/><rect x="8.8" y="7.9" width="11" height="5" fill="#3b78b5"/><rect x="8.8" y="13.9" width="9" height="5" fill="#d75b3a"/><rect x="8.8" y="19.9" width="5" height="5" fill="#3b78b5"/><rect x="14.5" y="17.5" width="17" height="14" fill="#fff"/><rect x="15.5" y="18.5" width="15" height="12.3" fill="#fff" stroke="#777" stroke-width="1.3"/><path d="M19.5 22.5 H27 M19.5 25.5 H27 M25 20 L21.5 28" stroke="#444" stroke-width="1.1"/></svg>
<div class="t" style="left:779.00px;top:97.25px;font-size:12.00px;color:#444;transform:scaleX(1.0256);">Conditional</div>
<div class="t" style="left:776.30px;top:113.25px;font-size:12.00px;color:#444;transform:scaleX(1.0146);">Formatting</div>
<svg class="a" style="left:837.5px;top:118px;" width="6.0" height="3.5" viewBox="0 0 6.0 3.5"><path d="M0 0H6 L3.0 3 Z" fill="#666"/></svg>
<svg class="a" style="left:856px;top:58px;" width="40" height="40" viewBox="0 0 40 40"><rect x="5.5" y="6.5" width="24" height="20" fill="#fff" stroke="#777" stroke-width="1.2"/><rect x="11.4" y="11.4" width="18" height="15" fill="#c5d7ea"/><path d="M5.5 11.4 H29.5 M5.5 16.6 H29.5 M5.5 21.4 H29.5 M11.4 6.5 V26.5 M17.6 6.5 V26.5 M23.5 6.5 V26.5" stroke="#aaa" stroke-width="1"/><rect x="5.5" y="6.5" width="24" height="20" fill="none" stroke="#777" stroke-width="1.2"/><g transform="translate(0.0 0.0)"><path d="M11.7 33.8 C 14 30, 18 26, 21.5 24.5 L 25.5 21 L 33.8 11.7 V 18.6 L 28.5 24 L 26 26.5 C 26 29, 24 32, 11.7 33.8 Z" fill="#fff" stroke="#fff" stroke-width="2.2"/><path d="M25.8 21.2 L33.8 11.7 V18.6 L28.3 23.8 Z" fill="#777"/><path d="M23 23.6 L25.2 21.6 L27.6 24.1 L25.5 26.2 Z" fill="#777"/><path d="M11.7 33.8 C 14 30, 18 26, 21.5 24.5 C 24 24, 26.2 26.5, 24.8 29.5 C 23.5 32, 17 33.5, 11.7 33.8 Z" fill="#3b78b5"/><path d="M20.5 26.8 C 22 27.3, 22.8 28.5, 22.8 30" fill="none" stroke="#fff" stroke-width="1.1"/></g></svg>
<div class="t" style="left:848.30px;top:97.25px;font-size:12.00px;color:#444;transform:scaleX(0.9556);">Format as</div>
<div class="t" style="left:856.60px;top:113.25px;font-size:12.00px;color:#444;transform:scaleX(1.0112);">Table</div>
<svg class="a" style="left:887.5px;top:118px;" width="6.0" height="3.5" viewBox="0 0 6.0 3.5"><path d="M0 0H6 L3.0 3 Z" fill="#666"/></svg>
<svg class="a" style="left:906px;top:58px;" width="40" height="40" viewBox="0 0 40 40"><rect x="5.5" y="4.5" width="25" height="21" fill="#fff" stroke="#777" stroke-width="1.2"/><rect x="10.6" y="9.3" width="13.8" height="10" fill="#c5d7ea"/><path d="M5.5 9.3 H30.5 M5.5 19.3 H30.5 M10.6 4.5 V25.5 M24.4 4.5 V25.5" stroke="#aaa" stroke-width="1"/><rect x="5.5" y="4.5" width="25" height="21" fill="none" stroke="#777" stroke-width="1.2"/><g transform="translate(0.0 -2.0)"><path d="M11.7 33.8 C 14 30, 18 26, 21.5 24.5 L 25.5 21 L 33.8 11.7 V 18.6 L 28.5 24 L 26 26.5 C 26 29, 24 32, 11.7 33.8 Z" fill="#fff" stroke="#fff" stroke-width="2.2"/><path d="M25.8 21.2 L33.8 11.7 V18.6 L28.3 23.8 Z" fill="#777"/><path d="M23 23.6 L25.2 21.6 L27.6 24.1 L25.5 26.2 Z" fill="#777"/><path d="M11.7 33.8 C 14 30, 18 26, 21.5 24.5 C 24 24, 26.2 26.5, 24.8 29.5 C 23.5 32, 17 33.5, 11.7 33.8 Z" fill="#3b78b5"/><path d="M20.5 26.8 C 22 27.3, 22.8 28.5, 22.8 30" fill="none" stroke="#fff" stroke-width="1.1"/></g></svg>
<div class="t" style="left:914.00px;top:97.25px;font-size:12.00px;color:#444;transform:scaleX(0.9662);">Cell</div>
<div class="t" style="left:904.90px;top:113.25px;font-size:12.00px;color:#444;transform:scaleX(0.9174);">Styles</div>
<svg class="a" style="left:937.5px;top:118px;" width="6.0" height="3.5" viewBox="0 0 6.0 3.5"><path d="M0 0H6 L3.0 3 Z" fill="#666"/></svg>
<svg class="a" style="left:958px;top:58px;" width="40" height="40" viewBox="0 0 40 40"><rect x="5.8" y="4.9" width="13.4" height="4.6" fill="#fff" stroke="#777" stroke-width="1.3"/><path d="M12.5 4.9 V9.5" stroke="#777" stroke-width="1.3"/><rect x="16.8" y="12.9" width="13.4" height="4.6" fill="#c5d7ea" stroke="#777" stroke-width="1.3"/><path d="M23.5 12.9 V17.5" stroke="#777" stroke-width="1.3"/><rect x="5.8" y="20.9" width="13.4" height="9.2" fill="#fff" stroke="#777" stroke-width="1.3"/><path d="M12.5 20.9 V30.1 M5.8 25.5 H19.2" stroke="#777" stroke-width="1.3"/><path d="M8 14.9 H12.8" stroke="#3b78b5" stroke-width="2"/><path d="M5.6 14.9 L9.2 11.6 V18.2 Z" fill="#3b78b5"/></svg>
<div class="t" style="left:960.80px;top:97.25px;font-size:12.00px;color:#444;transform:scaleX(0.9700);">Insert</div>
<svg class="a" style="left:972.5px;top:117px;" width="6.0" height="3.5" viewBox="0 0 6.0 3.5"><path d="M0 0H6 L3.0 3 Z" fill="#666"/></svg>
<svg class="a" style="left:999px;top:58px;" width="40" height="40" viewBox="0 0 40 40"><rect x="5.8" y="4.9" width="13.4" height="4.6" fill="#fff" stroke="#777" stroke-width="1.3"/><path d="M12.5 4.9 V9.5" stroke="#777" stroke-width="1.3"/><rect x="11.7" y="12.9" width="9" height="4.6" fill="#c5d7ea" stroke="#777" stroke-width="1.3"/><path d="M16.2 12.9 V17.5" stroke="#777" stroke-width="1.3"/><path d="M21 12.5 L24 15.2 L21 18 Z" fill="#c5d7ea"/><rect x="5.8" y="21.9" width="13.4" height="9.2" fill="#fff" stroke="#777" stroke-width="1.3"/><path d="M12.5 21.9 V31.1 M5.8 26.5 H19.2" stroke="#777" stroke-width="1.3"/><path d="M19.5 21.5 L19.5 20.5" stroke="#fff" stroke-width="3"/><path d="M20 9.7 L33.5 22.8 M34 10.2 L20.5 22.4" stroke="#d9573a" stroke-width="2.6" stroke-linecap="round"/></svg>
<div class="t" style="left:1001.00px;top:97.25px;font-size:12.00px;color:#444;transform:scaleX(0.9573);">Delete</div>
<svg class="a" style="left:1014.5px;top:117px;" width="6.0" height="3.5" viewBox="0 0 6.0 3.5"><path d="M0 0H6 L3.0 3 Z" fill="#666"/></svg>
<svg class="a" style="left:1040px;top:56px;" width="40" height="40" viewBox="0 0 40 40"><path d="M6.4 5 V10 M28.5 5 V10 M7 7.5 H28" stroke="#3b78b5" stroke-width="1.2"/><path d="M8.2 7.5 L11.2 5.3 M8.2 7.5 L11.2 9.7 M26.8 7.5 L23.8 5.3 M26.8 7.5 L23.8 9.7" stroke="#3b78b5" stroke-width="1.2"/><rect x="6.6" y="11.7" width="27" height="19.8" fill="#fff" stroke="#777" stroke-width="1.3"/><path d="M6.6 16.6 H33.6 M6.6 26.6 H33.6 M13.6 11.7 V31.5 M21.4 11.7 V31.5 M28.5 11.7 V31.5" stroke="#aaa" stroke-width="1.1"/><rect x="13.9" y="17.1" width="7.2" height="8.9" fill="#3b78b5"/><path d="M7 31.5 V35.3 H13 L14.8 33.5 H16 V35.3 H22 L24 33 " fill="none" stroke="#888" stroke-width="1.1"/></svg>
<div class="t" style="left:1041.10px;top:97.25px;font-size:12.00px;color:#444;transform:scaleX(1.0058);">Format</div>
<svg class="a" style="left:1057.5px;top:117px;" width="6.0" height="3.5" viewBox="0 0 6.0 3.5"><path d="M0 0H6 L3.0 3 Z" fill="#666"/></svg>
<svg class="a" style="left:1092px;top:58px;" width="20" height="20" viewBox="0 0 20 20"><path d="M16.5 3.5 V2.5 H3 L9.5 9.5 L3 16.5 H17 V15.5" fill="none" stroke="#444" stroke-width="2.2" stroke-linejoin="miter"/></svg>
<div class="t" style="left:1112.80px;top:63.25px;font-size:12.00px;color:#444;transform:scaleX(1.0085);">AutoSum</div>
<svg class="a" style="left:1172.5px;top:67px;" width="6.0" height="3.5" viewBox="0 0 6.0 3.5"><path d="M0 0H6 L3.0 3 Z" fill="#666"/></svg>
<svg class="a" style="left:1094px;top:82px;" width="17" height="18" viewBox="0 0 17 18"><rect x="1.5" y="1.5" width="13.5" height="15" fill="#fff" stroke="#777" stroke-width="1.1"/><rect x="1" y="1" width="14.5" height="3.8" fill="#777"/><path d="M8.3 6 V12" stroke="#3b78b5" stroke-width="2.4"/><path d="M4.3 10.2 L8.3 15 L12.3 10.2 L10.5 10.2 L8.3 12.6 L6.1 10.2 Z" fill="#3b78b5" stroke="#3b78b5" stroke-width="0.8"/></svg>
<div class="t" style="left:1112.80px;top:86.25px;font-size:12.00px;color:#444;transform:scaleX(0.9935);">Fill</div>
<svg class="a" style="left:1130.5px;top:90px;" width="6.0" height="3.5" viewBox="0 0 6.0 3.5"><path d="M0 0H6 L3.0 3 Z" fill="#666"/></svg>
<svg class="a" style="left:1094px;top:105px;" width="17" height="17" viewBox="0 0 17 17"><path d="M1.2 10.5 L9.9 2 L14.2 5.9 L5.3 14.3 Z" fill="#e07b93"/><path d="M3.8 8 L7.9 12" stroke="#fff" stroke-width="1.1"/><rect x="5.7" y="13.8" width="9.3" height="1.1" fill="#666"/></svg>
<div class="t" style="left:1112.80px;top:109.25px;font-size:12.00px;color:#444;transform:scaleX(0.9623);">Clear</div>
<svg class="a" style="left:1142.5px;top:113px;" width="6.0" height="3.5" viewBox="0 0 6.0 3.5"><path d="M0 0H6 L3.0 3 Z" fill="#666"/></svg>
<div class="t" style="left:1188.60px;top:61.75px;font-size:16.00px;color:#3b7bc0;font-weight:bold;transform:scaleX(1.0243);">A</div>
<div class="t" style="left:1189.30px;top:76.25px;font-size:15.00px;color:#9b59c0;font-weight:bold;transform:scaleX(1.1038);">Z</div>
<svg class="a" style="left:1200px;top:69px;" width="19" height="17" viewBox="0 0 19 17"><path d="M0.8 1 H17.8 L11.2 8.4 V15.8 H7.6 V8.4 Z" fill="#777"/><path d="M3.2 2.4 L8.9 8.6 V14.8 H9.9 V8.6" fill="#fff" stroke="#fff" stroke-width="0.9"/></svg>
<div class="t" style="left:1186.60px;top:97.25px;font-size:12.00px;color:#444;transform:scaleX(1.0192);">Sort &amp;</div>
<div class="t" style="left:1187.00px;top:113.25px;font-size:12.00px;color:#444;transform:scaleX(0.9835);">Filter</div>
<svg class="a" style="left:1216.5px;top:118px;" width="6.0" height="3.5" viewBox="0 0 6.0 3.5"><path d="M0 0H6 L3.0 3 Z" fill="#666"/></svg>
<svg class="a" style="left:1233px;top:63px;" width="28" height="25" viewBox="0 0 28 25"><g fill="#777"><rect x="6" y="1" width="4" height="3"/><rect x="17" y="1" width="4" height="3"/><rect x="4" y="4" width="7" height="5"/><rect x="16" y="4" width="7" height="5"/><rect x="2" y="9" width="10" height="5"/><rect x="15" y="9" width="10" height="5"/><rect x="11" y="10" width="5" height="4"/><rect x="1" y="14" width="11" height="10"/><rect x="15" y="14" width="11" height="10"/></g><g fill="#fff"><rect x="7" y="2" width="1" height="2"/><rect x="18" y="2" width="1" height="2"/><rect x="5" y="5" width="1" height="4"/><rect x="17" y="5" width="1" height="4"/><rect x="3" y="10" width="1" height="4"/><rect x="23" y="10" width="1" height="4"/><rect x="2" y="15" width="1" height="8"/><rect x="24" y="15" width="1" height="8"/><rect x="12.5" y="11" width="2" height="1"/></g></svg>
<div class="t" style="left:1228.50px;top:97.25px;font-size:12.00px;color:#444;transform:scaleX(1.0438);">Find &amp;</div>
<div class="t" style="left:1226.70px;top:113.25px;font-size:12.00px;color:#444;transform:scaleX(0.9382);">Select</div>
<svg class="a" style="left:1260.5px;top:118px;" width="6.0" height="3.5" viewBox="0 0 6.0 3.5"><path d="M0 0H6 L3.0 3 Z" fill="#666"/></svg>
<svg class="a" style="left:1337px;top:134px;" width="11" height="7" viewBox="0 0 11 7"><path d="M1 6 L5.5 1.5 L10 6" fill="none" stroke="#555" stroke-width="1.6"/></svg>
<div class="t" style="left:12.80px;top:164.25px;font-size:13.00px;color:#333;transform:scaleX(0.9736);">H2</div>
<svg class="a" style="left:94.0px;top:168px;" width="7" height="4" viewBox="0 0 7 4"><path d="M0 0H7 L3.5 3 Z" fill="#777"/></svg>
<div class="a" style="left:122.5px;top:165px;width:1.5px;height:1.5px;background:#999;"></div>
<div class="a" style="left:122.5px;top:170px;width:1.5px;height:1.5px;background:#999;"></div>
<div class="a" style="left:122.5px;top:174px;width:1.5px;height:1.5px;background:#999;"></div>
<svg class="a" style="left:138px;top:157px;" width="110" height="26" viewBox="0 0 110 26"><path d="M11 6.5 L26 20.5 M26 6.5 L11 20.5" stroke="#c3c3c3" stroke-width="2.2"/><path d="M47 13.5 L52 19 L64 6.5" fill="none" stroke="#c3c3c3" stroke-width="2.8"/></svg>
<div class="t" style="left:219px;top:158px;font-family:'Liberation Serif',serif;font-style:italic;font-weight:bold;font-size:21px;color:#555;letter-spacing:-0.3px">fx</div>
<svg class="a" style="left:1337px;top:166px;" width="13" height="10" viewBox="0 0 13 10"><path d="M1.5 2 L6.5 7 L11.5 2" fill="none" stroke="#6d6d6d" stroke-width="3.2"/></svg>
<svg class="a" style="left:11px;top:196px;" width="13" height="13" viewBox="0 0 13 13"><path d="M12 0.5 V12.5 H0 Z" fill="#dadada"/></svg>
<div class="a" style="left:1336px;top:193px;width:21px;height:277px;background:#fff;"></div>
<div class="a" style="left:1339px;top:195px;width:15px;height:15px;border:1px solid #ababab;background:#fff;"></div>
<svg class="a" style="left:1342px;top:200px;" width="9" height="5" viewBox="0 0 9 5"><path d="M0.5 4.5 L4.5 0.5 L8.5 4.5 Z" fill="#777"/></svg>
<div class="a" style="left:1339px;top:210px;width:15px;height:246px;border:1px solid #ababab;background:#fff;"></div>
<div class="a" style="left:1339px;top:456px;width:15px;height:15px;border:1px solid #ababab;background:#fff;"></div>
<svg class="a" style="left:1342px;top:461px;" width="9" height="5" viewBox="0 0 9 5"><path d="M0.5 0.5 L4.5 4.5 L8.5 0.5 Z" fill="#777"/></svg>
<svg class="a" style="left:1311px;top:296px;" width="24" height="24" viewBox="0 0 24 24"><rect x="0.5" y="0.5" width="23" height="23" fill="none" stroke="#b9d6c4" stroke-width="1"/><path d="M9.5 4.5 L5 10.5 H8 L5.5 14.5 L11.5 8.5 H8.5 L10.5 4.5 Z" fill="#f7e0bd"/><rect x="10.5" y="5" width="8" height="2.4" fill="#c8c8c8"/><rect x="10.5" y="9.3" width="4" height="1.2" fill="#eea08a"/><rect x="9.5" y="11.8" width="8.5" height="2" fill="#a9c4e4"/><rect x="9.5" y="15" width="5.5" height="1" fill="#9ccfb0"/><path d="M3.5 15.5 V18 H12" fill="none" stroke="#d0d0d0" stroke-width="1"/></svg>
<svg class="a" style="left:26px;top:478px;" width="9" height="11" viewBox="0 0 9 11"><path d="M6.5 1 L1.5 5.5 L6.5 10 Z" fill="#c6c6c6"/></svg>
<svg class="a" style="left:55px;top:478px;" width="9" height="11" viewBox="0 0 9 11"><path d="M1.5 1 L6.5 5.5 L1.5 10 Z" fill="#c6c6c6"/></svg>
<div class="a" style="left:101px;top:470px;width:74px;height:25px;background:#fff;border:1px solid #ababab;border-top:none"></div>
<div class="a" style="left:101px;top:493px;width:74px;height:2px;background:#217346;"></div>
<div class="t" style="left:113.00px;top:476.25px;font-size:14.00px;color:#217346;font-weight:bold;transform:scaleX(0.8836);">Projects</div>
<div class="a" style="left:186px;top:488px;width:5px;height:1.3px;background:#444;"></div>
<div class="a" style="left:202px;top:474px;width:1px;height:19px;background:#c6c6c6;"></div>
<svg class="a" style="left:234px;top:474px;" width="20" height="20" viewBox="0 0 20 20"><circle cx="10" cy="10" r="7.6" fill="none" stroke="#777" stroke-width="1.2"/><path d="M10 5.5 V14.5 M5.5 10 H14.5" stroke="#777" stroke-width="2"/></svg>
<div class="a" style="left:814px;top:479px;width:2px;height:2px;background:#aaa;"></div>
<div class="a" style="left:814px;top:483px;width:2px;height:2px;background:#aaa;"></div>
<div class="a" style="left:814px;top:487px;width:2px;height:2px;background:#aaa;"></div>
<div class="a" style="left:831px;top:477px;width:505px;height:15px;border:1px solid #ababab;background:#e8e8e8;"></div>
<div class="a" style="left:831px;top:477px;width:15px;height:15px;border:1px solid #ababab;background:#fff;"></div>
<svg class="a" style="left:835px;top:480px;" width="6" height="9" viewBox="0 0 6 9"><path d="M5.5 0.5 V8.5 L0.5 4.5 Z" fill="#777"/></svg>
<div class="a" style="left:845px;top:477px;width:416px;height:15px;border:1px solid #ababab;background:#fff;"></div>
<div class="a" style="left:1321px;top:477px;width:15px;height:15px;border:1px solid #ababab;background:#fff;"></div>
<svg class="a" style="left:1325px;top:480px;" width="6" height="9" viewBox="0 0 6 9"><path d="M0.5 0.5 V8.5 L5.5 4.5 Z" fill="#777"/></svg>
<div class="t" style="left:7.40px;top:504.75px;font-size:11.00px;color:#fff;transform:scaleX(0.8919);">READY</div>
<div class="t" style="left:986.00px;top:503.25px;font-size:12.00px;color:#fff;transform:scaleX(0.8928);">COUNT: 2</div>
<div class="a" style="left:1054px;top:499px;width:38px;height:21px;background:#105e33;"></div>
<svg class="a" style="left:1065px;top:502px;" width="15" height="14" viewBox="0 0 15 14"><path d="M1 0.5 H13.5 V13 H1 Z M1 4.7 H13.5 M1 8.8 H13.5 M5.2 0.5 V13 M9.3 0.5 V13" fill="none" stroke="#fff" stroke-width="1.3"/></svg>
<svg class="a" style="left:1103px;top:502px;" width="16" height="14" viewBox="0 0 16 14"><rect x="1" y="0.8" width="13.5" height="12.4" fill="none" stroke="#fff" stroke-width="1.3"/><rect x="4" y="3" width="7.5" height="8" fill="none" stroke="#fff" stroke-width="1.2"/><path d="M5.5 5.3 H10 M5.5 7.2 H10 M5.5 9 H10" stroke="#fff" stroke-width="0.9"/></svg>
<svg class="a" style="left:1141px;top:502px;" width="16" height="14" viewBox="0 0 16 14"><rect x="1" y="0.8" width="13.5" height="12.4" fill="none" stroke="#fff" stroke-width="1.3"/><rect x="1" y="0.8" width="3" height="8" fill="#fff"/><rect x="5.5" y="0.8" width="3" height="8" fill="#fff"/><path d="M9.5 8.5 H14.5" stroke="#fff"/></svg>
<div class="a" style="left:1173px;top:508px;width:6px;height:2.5px;background:#fff;"></div>
<div class="a" style="left:1183px;top:508px;width:100px;height:1px;background:#fff;"></div>
<div class="a" style="left:1231px;top:503px;width:4.5px;height:11px;background:#fff;"></div>
<svg class="a" style="left:1286px;top:502px;" width="11" height="12" viewBox="0 0 11 12"><path d="M5.5 1.5 V10.5 M1 6 H10" stroke="#fff" stroke-width="2.2"/></svg>
<div class="t" style="left:1309.90px;top:503.50px;font-size:11.50px;color:#fff;transform:scaleX(0.9273);">100%</div>
<div class="a" style="left:0px;top:0px;width:1358px;height:1px;background:#217346;"></div>
<div class="a" style="left:0px;top:0px;width:1px;height:521px;background:#217346;"></div>
<div class="a" style="left:1357px;top:0px;width:1px;height:521px;background:#217346;"></div>
</body></html>
